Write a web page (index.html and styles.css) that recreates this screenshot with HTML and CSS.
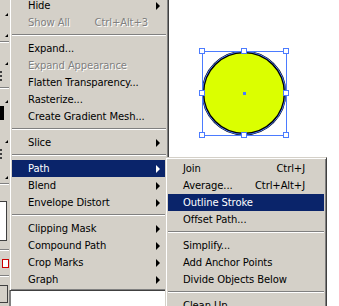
FILE: index.html
```html
<!DOCTYPE html>
<html lang="en">
<head>
  <meta charset="UTF-8">
  <title>Object menu</title>
  <link rel="stylesheet" href="styles.css">
</head>
<body>
  <div class="app">
    <div class="toolbar">
      <div class="tool t-18"><span class="corner"></span></div>
      <div class="tool t-21"><span class="corner"></span></div>
      <div class="tool-sep"></div>
      <div class="tool t-22"><span class="corner"></span></div>
      <div class="tool t-18"><span class="dots"></span></div>
      <div class="tool-sep"></div>
      <div class="tool t-14"><span class="corner"></span></div>
      <div class="tool t-18"><span class="block"></span></div>
      <div class="tool t-22"><span class="corner"></span></div>
      <div class="tool t-18"><span class="dots"></span></div>
      <div class="tool t-18"><span class="corner"></span></div>
      <div class="tool-sep"></div>
      <div class="swatch"></div>
      <div class="tool-sep"></div>
      <div class="mini"></div>
      <div class="tool-sep"></div>
      <div class="btn"></div>
    </div>

    <div class="canvas">
      <svg class="art" width="100" height="100" viewBox="196 45 100 100">
        <circle cx="244" cy="93" r="41" fill="#dbff00" stroke="#000" stroke-width="2.6"/>
        <circle cx="244" cy="93" r="41.5" fill="none" stroke="#4b7bff" stroke-width="1"/>
        <rect x="202.5" y="51.5" width="84" height="84" fill="none" stroke="#4b7bff" stroke-width="1"/>
        <g fill="#fff" stroke="#4b7bff" stroke-width="1">
          <rect x="199.5" y="48.5" width="5" height="5"/>
          <rect x="241.5" y="48.5" width="5" height="5"/>
          <rect x="283.5" y="48.5" width="5" height="5"/>
          <rect x="199.5" y="90.5" width="5" height="5"/>
          <rect x="283.5" y="90.5" width="5" height="5"/>
          <rect x="199.5" y="132.5" width="5" height="5"/>
          <rect x="241.5" y="132.5" width="5" height="5"/>
          <rect x="283.5" y="132.5" width="5" height="5"/>
        </g>
        <rect x="243" y="92" width="3" height="3" fill="#4b7bff"/>
      </svg>
    </div>

    <div class="menu menu-main">
      <div class="item">Hide<span class="arrow"></span></div>
      <div class="item disabled">Show All<span class="key">Ctrl+Alt+3</span></div>
      <div class="sep"></div>
      <div class="item">Expand...</div>
      <div class="item disabled">Expand Appearance</div>
      <div class="item">Flatten Transparency...</div>
      <div class="item">Rasterize...</div>
      <div class="item">Create Gradient Mesh...</div>
      <div class="sep"></div>
      <div class="item">Slice<span class="arrow"></span></div>
      <div class="sep"></div>
      <div class="item active">Path<span class="arrow"></span></div>
      <div class="item">Blend<span class="arrow"></span></div>
      <div class="item">Envelope Distort<span class="arrow"></span></div>
      <div class="sep"></div>
      <div class="item">Clipping Mask<span class="arrow"></span></div>
      <div class="item">Compound Path<span class="arrow"></span></div>
      <div class="item">Crop Marks<span class="arrow"></span></div>
      <div class="item">Graph<span class="arrow"></span></div>
    </div>

    <div class="menu menu-sub">
      <div class="item">Join<span class="key">Ctrl+J</span></div>
      <div class="item">Average...<span class="key">Ctrl+Alt+J</span></div>
      <div class="item active">Outline Stroke</div>
      <div class="item">Offset Path...</div>
      <div class="sep"></div>
      <div class="item">Simplify...</div>
      <div class="item">Add Anchor Points</div>
      <div class="item">Divide Objects Below</div>
      <div class="sep"></div>
      <div class="item">Clean Up...</div>
    </div>
  </div>
</body>
</html>
```

FILE: styles.css
```css
body {
  margin: 0;
  background: #fff;
  font-family: "DejaVu Sans", Tahoma, sans-serif;
  font-size: 10px;
  color: #000;
  overflow: hidden;
}

.app {
  position: relative;
  display: flex;
  width: 339px;
  height: 306px;
  overflow: hidden;
}

/* left tool palette, only its edge shows */
.toolbar {
  width: 9px;
  flex: none;
  background: #d4d0c8;
  border-right: 2px solid #808080;
  display: flex;
  flex-direction: column;
}

.tool {
  position: relative;
  flex: none;
}

.t-14 { height: 14px; }
.t-18 { height: 18px; }
.t-21 { height: 21px; }
.t-22 { height: 22px; }

.corner {
  position: absolute;
  right: 1px;
  bottom: 2px;
  width: 0;
  height: 0;
  border-left: 3px solid transparent;
  border-bottom: 3px solid #000;
}

.dots {
  position: absolute;
  left: 0;
  top: 4px;
  width: 2px;
  height: 10px;
  border-left: 2px dotted #404040;
}

.block {
  position: absolute;
  left: 0;
  top: 1px;
  width: 4px;
  height: 14px;
  background: #000;
}

.tool-sep {
  flex: none;
  height: 1px;
  margin: 2px 0;
  background: #808080;
  border-bottom: 1px solid #fff;
}

.swatch {
  flex: none;
  height: 38px;
  margin: 14px 2px 6px 0;
  background: #fff;
  border: 1px solid #404040;
  border-left: none;
}

.mini {
  flex: none;
  height: 7px;
  width: 5px;
  margin: 6px 0 5px 2px;
  border: 1px solid #c00;
  background: #fff;
}

.btn {
  flex: none;
  height: 16px;
  margin: 6px 1px 0 0;
  border: 1px solid #404040;
  border-left: none;
}

.canvas {
  flex: 1;
  position: relative;
  background: #fff;
}

.art {
  position: absolute;
  left: 185px;
  top: 45px;
}

/* classic menus */
.menu {
  position: absolute;
  background: #d4d0c8;
  border: 1px solid;
  border-color: #d4d0c8 #404040 #404040 #d4d0c8;
  box-shadow: inset 1px 1px #fff, inset -1px -1px #808080;
  padding: 2px;
}

.menu-main {
  left: 9px;
  top: -6px;
  width: 154px;
}

.menu-sub {
  left: 165px;
  top: 157px;
  width: 156px;
}

.item {
  display: flex;
  align-items: center;
  height: 17px;
  padding: 0 6px 0 16px;
  white-space: nowrap;
  letter-spacing: -0.1px;
}

.menu-sub .item {
  padding: 0 19px 0 15px;
}

.item.active {
  background: #0a246a;
  color: #fff;
}

.item.disabled {
  color: #808080;
  text-shadow: 1px 1px 0 #fff;
}

.key {
  margin-left: auto;
  margin-right: 12px;
}

.menu-sub .key {
  margin-right: 0;
}

.arrow {
  margin-left: auto;
  width: 0;
  height: 0;
  border-left: 4px solid #000;
  border-top: 4px solid transparent;
  border-bottom: 4px solid transparent;
}

.active .arrow {
  border-left-color: #fff;
}

.sep {
  height: 1px;
  margin: 3px 0 4px;
  background: #808080;
  border-bottom: 1px solid #fff;
}
```
